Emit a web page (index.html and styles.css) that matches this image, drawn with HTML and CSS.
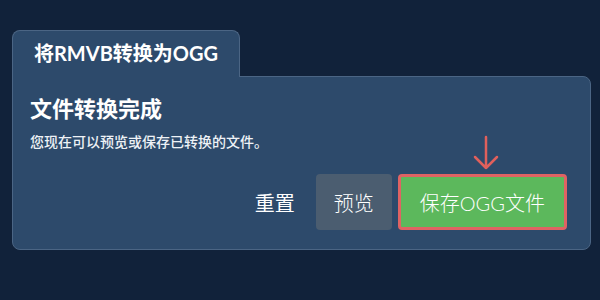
FILE: index.html
```html
<!DOCTYPE html>
<html lang="zh-CN">
<head>
    <meta charset="UTF-8">
    <meta name="viewport" content="width=device-width, initial-scale=1.0">
    <title>将RMVB转换为OGG</title>
    <link rel="stylesheet" href="styles.css">
</head>
<body>
    <div class="container">
        <div class="tab">将RMVB转换为OGG</div>
        <div class="panel">
            <h2>文件转换完成</h2>
            <p class="desc">您现在可以预览或保存已转换的文件。</p>
            <div class="actions">
                <button type="button" class="btn btn-reset">重置</button>
                <button type="button" class="btn btn-preview">预览</button>
                <div class="save-wrap">
                    <svg class="hint-arrow" width="30" height="36" viewBox="0 0 30 36">
                        <path d="M15 2 V33 M4 22 L15 33 L26 22" fill="none" stroke="#e0605c" stroke-width="2.5" stroke-linecap="round" stroke-linejoin="round"/>
                    </svg>
                    <button type="button" class="btn btn-save">保存OGG文件</button>
                </div>
            </div>
        </div>
    </div>
</body>
</html>
```

FILE: styles.css
```css
body {
    margin: 0;
    background-color: #11223a;
    font-family: Lato, "Noto Sans CJK SC", sans-serif;
    color: #ffffff;
}
.container {
    padding: 30px 9px 0 12px;
}
.tab {
    display: inline-block;
    position: relative;
    z-index: 1;
    height: 46px;
    line-height: 44px;
    padding: 0 21px;
    margin-bottom: -1px;
    background-color: #2d4a6b;
    border: 1px solid #4b6584;
    border-bottom: none;
    border-radius: 8px 8px 0 0;
    font-size: 20px;
    font-weight: bold;
}
.panel {
    background-color: #2d4a6b;
    border: 1px solid #4b6584;
    border-radius: 0 8px 8px 8px;
    padding: 15px 23px 19px 17px;
}
h2 {
    margin: 0;
    font-size: 22px;
    font-weight: bold;
    line-height: 34px;
}
.desc {
    margin: 6px 0 0;
    font-size: 14px;
    font-weight: 500;
    line-height: 20px;
    color: #eef2f6;
}
.actions {
    display: flex;
    justify-content: flex-end;
    align-items: center;
    gap: 6px;
    margin-top: 22px;
}
.btn {
    font-family: Lato, "Noto Sans CJK SC", sans-serif;
    font-size: 20px;
    font-weight: 300;
    color: #ffffff;
    border: none;
    border-radius: 4px;
    height: 56px;
    cursor: pointer;
}
.btn-reset {
    background: transparent;
    padding: 0 15px;
    font-weight: normal;
}
.btn-preview {
    background-color: #4b5d70;
    padding: 0 18px;
}
.save-wrap {
    position: relative;
}
.hint-arrow {
    position: absolute;
    left: 73px;
    top: -39px;
}
.btn-save {
    background-color: #5cb85c;
    border: 3px solid #df6363;
    padding: 0 19px;
    display: block;
}
```
